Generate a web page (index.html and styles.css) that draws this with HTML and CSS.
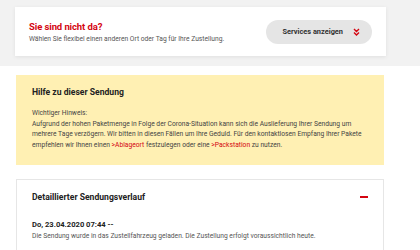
FILE: index.html
```html
<!DOCTYPE html>
<html lang="de">
<head>
  <meta charset="UTF-8">
  <meta name="viewport" content="width=device-width, initial-scale=1.0">
  <title>Sendungsverfolgung</title>
  <link rel="stylesheet" href="styles.css">
</head>
<body>
  <div class="band">
    <div class="notice">
      <div>
        <h3 class="notice-title">Sie sind nicht da?</h3>
        <p class="notice-text">Wählen Sie flexibel einen anderen Ort oder Tag für Ihre Zustellung.</p>
      </div>
      <button class="services">
        Services anzeigen
        <svg class="chev" width="7" height="8" viewBox="0 0 7 8">
          <path d="M1 1 L3.5 3.5 L6 1 M1 4.5 L3.5 7 L6 4.5" fill="none" stroke="#d40511" stroke-width="1.4"/>
        </svg>
      </button>
    </div>
  </div>

  <div class="main">
    <div class="hint">
      <h4>Hilfe zu dieser Sendung</h4>
      <p>Wichtiger Hinweis:<br>
      Aufgrund der hohen Paketmenge in Folge der Corona-Situation kann sich die Auslieferung Ihrer Sendung um mehrere Tage verzögern. Wir bitten in diesen Fällen um Ihre Geduld. Für den kontaktlosen Empfang Ihrer Pakete empfehlen wir Ihnen einen <a href="#">&gt;Ablageort</a> festzulegen oder eine <a href="#">&gt;Packstation</a> zu nutzen.</p>
    </div>

    <div class="history">
      <div class="history-head">
        <h4>Detaillierter Sendungsverlauf</h4>
        <span class="minus"></span>
      </div>
      <div class="event">
        <div class="event-date">Do, 23.04.2020 07:44 --</div>
        <div class="event-text">Die Sendung wurde in das Zustellfahrzeug geladen. Die Zustellung erfolgt voraussichtlich heute.</div>
      </div>
    </div>
  </div>
</body>
</html>
```

FILE: styles.css
```css
body {
  margin: 0;
  background: white;
  font-family: Roboto, "Noto Sans", sans-serif;
  color: #323232;
}
.band {
  background: #f2f2f2;
  padding: 7px 34px 10px 15px;
}
.notice {
  background: white;
  box-shadow: 0 1px 4px rgba(0,0,0,0.08);
  height: 49px;
  padding: 0 14px;
  display: flex;
  justify-content: space-between;
  align-items: center;
}
.notice-title {
  margin: 0;
  color: #d40511;
  font-size: 9.5px;
  font-weight: bold;
  letter-spacing: -0.1px;
}
.notice-text {
  margin: 3px 0 0;
  font-size: 6.7px;
  color: #555;
}
.services {
  width: 106px;
  height: 24px;
  border: none;
  border-radius: 12px;
  background: #e5e5e5;
  font-family: inherit;
  font-size: 7.4px;
  font-weight: bold;
  color: #333;
  display: flex;
  align-items: center;
  justify-content: flex-end;
  gap: 10px;
  padding: 0 12px 0 0;
}
.chev { display: block; }
.main {
  padding: 9px 36px 0 16px;
}
.hint {
  background: #fff0b3;
  padding: 12px 16px 15px;
}
h4 {
  margin: 0;
  font-size: 8.6px;
  font-weight: bold;
  color: #222;
}
.hint p {
  margin: 11px 0 0;
  font-size: 6.7px;
  line-height: 10.6px;
  color: #444;
}
.hint a { color: #d40511; text-decoration: none; }
.history {
  margin-top: 14px;
  border: 1px solid #e6e6e6;
  padding: 12px 15px 20px;
}
.history-head {
  display: flex;
  justify-content: space-between;
  align-items: center;
}
.minus {
  width: 8px;
  height: 2px;
  background: #d40511;
}
.event { margin-top: 18px; }
.event-date {
  font-size: 7.6px;
  font-weight: bold;
  color: #222;
}
.event-text {
  margin-top: 3px;
  font-size: 6.7px;
  color: #555;
}
```
